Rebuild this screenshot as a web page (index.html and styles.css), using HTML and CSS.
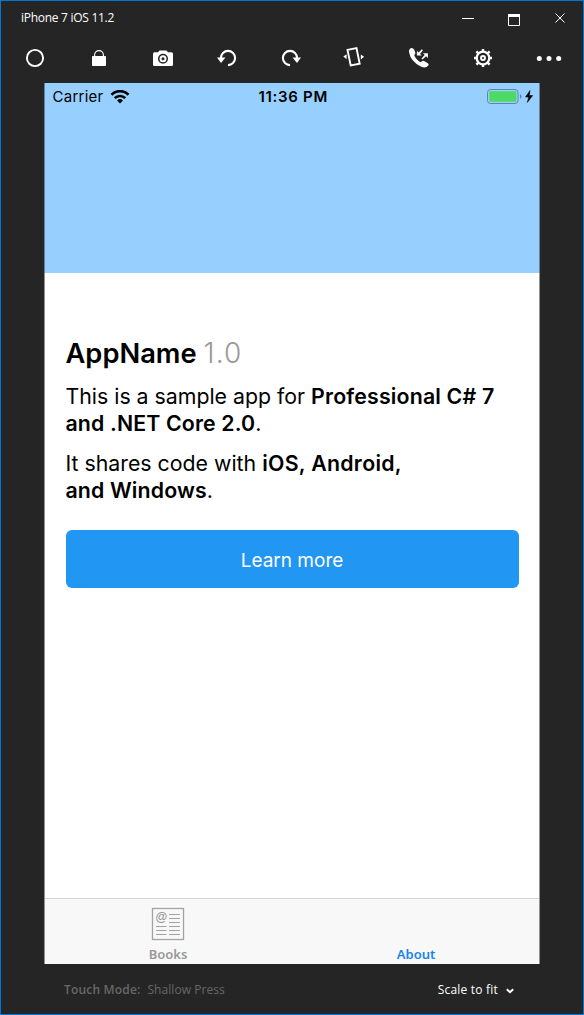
FILE: index.html
```html
<!DOCTYPE html>
<html lang="en">
<head>
<meta charset="utf-8">
<title>iPhone 7 iOS 11.2</title>
<link rel="stylesheet" href="styles.css">
</head>
<body>
<div class="window">
  <header class="titlebar">
    <span class="title">iPhone 7 iOS 11.2</span>
    <svg class="controls" width="106" height="18" viewBox="0 0 106 18" fill="none" stroke="#fff">
      <path d="M0 9.500h12"/>
      <path d="M46.500 6.500h11v10h-11z"/><path d="M46 6.500h12" stroke-width="3"/>
      <path d="M93.500 4.500l9 9m0-9l-9 9"/>
    </svg>
  </header>
  <nav class="toolbar">
    <svg class="tool" viewBox="0 0 24 24"><circle cx="12" cy="12" r="8.100" fill="none" stroke="#fff" stroke-width="1.900"/></svg>
    <svg class="tool" viewBox="0 0 24 24"><rect x="5" y="10" width="14" height="10" rx=".800" fill="#fff"/><path d="M7.600 11V9a4.400 4.400 0 0 1 8.800 0V11" fill="none" stroke="#fff" stroke-width="1.100"/></svg>
    <svg class="tool" viewBox="0 0 24 24"><path fill="#fff" fill-rule="evenodd" d="M3.500 6.200H7L8.600 4.400h6.800L17 6.200h3.500Q22 6.200 22 7.700v10.800q0 1.500-1.500 1.500h-17Q2 20 2 18.500V7.700Q2 6.200 3.500 6.200zM12 7.800a5 5 0 1 0 0 10a5 5 0 1 0 0-10z"/><circle cx="12" cy="12.800" r="2.500" fill="none" stroke="#fff" stroke-width="2"/></svg>
    <svg class="tool" viewBox="0 0 24 24"><path d="M5.900 12A7.100 7.100 0 1 1 13 19.100" fill="none" stroke="#fff" stroke-width="2.100"/><path d="M2 11.500h8.500L6 17z" fill="#fff"/></svg>
    <svg class="tool" viewBox="0 0 24 24"><path d="M18.100 12A7.100 7.100 0 1 0 11 19.100" fill="none" stroke="#fff" stroke-width="2.100"/><path d="M22 11.500h-8.500L18 17z" fill="#fff"/></svg>
    <svg class="tool rotate" viewBox="0 0 24 24"><path d="M5.500 3.900L14.500 2.100 17.700 17.700 8.700 19.500z" fill="none" stroke="#fff" stroke-width="1.900"/><path d="M4.600 8.300v5L1.300 10.500zM18.800 8.500v5l3.300-2.700z" fill="#fff"/></svg>
    <svg class="tool" viewBox="0 0 24 24"><path fill="#fff" d="M3.200 2.400Q5.800 1 7.200 3.700L8.300 6.500Q8.600 8 7.200 9 8.700 13.500 13.500 16.200L15 15.200Q16.200 14.500 17.500 15.300L20.800 17.300Q22.300 18.200 21.300 19.600 18.700 22.700 14.300 20.800 3.500 15.600 2 6Q1.800 3.400 3.200 2.400zM9.900 4.700v4.900h5L13 7.900l2.900-3.700-1-1-3.400 3.200zM20.900 7.200h-5l1.800 1.700-3.200 3.700 1 1 3.500-3.400 1.900 1.800z"/></svg>
    <svg class="tool" viewBox="0 0 24 24"><g stroke="#fff" stroke-width="2.400"><path d="M12 3v3M12 18v3M3 12h3M18 12h3M5.400 5.400l2 2M16.600 16.600l2 2M5.400 18.600l2-2M16.600 7.400l2-2"/></g><circle cx="12" cy="12" r="6.300" fill="none" stroke="#fff" stroke-width="2.300"/><circle cx="12" cy="12" r="2" fill="none" stroke="#fff" stroke-width="1.900"/></svg>
    <svg class="tool dots" viewBox="0 0 28 24"><circle cx="4.300" cy="12.500" r="2.500" fill="#fff"/><circle cx="14" cy="12.500" r="2.500" fill="#fff"/><circle cx="23.700" cy="12.500" r="2.500" fill="#fff"/></svg>
  </nav>
  <main class="phone">
    <section class="hero">
      <div class="status">
        <div class="carrier"><span>Carrier</span>
          <svg width="20" height="14" viewBox="0 0 20 14" fill="none" stroke="#000"><path d="M1.500 4.700a12 12 0 0 1 17 0" stroke-width="2.700"/><path d="M4.700 8.100a7.500 7.500 0 0 1 10.600 0" stroke-width="2.500"/><path d="M10 13.400L7 10.500a4.300 4.300 0 0 1 6 0z" fill="#000" stroke="none"/></svg>
        </div>
        <span class="clock">11:36 PM</span>
        <svg class="battery" width="48" height="16" viewBox="0 0 48 16"><rect x=".500" y=".500" width="30.500" height="14" rx="3" fill="none" stroke="#5a86ad"/><rect x="2.300" y="2.300" width="27" height="10.400" rx="1" fill="#4cd964"/><path d="M33 5v5q3-2.500 0-5z" fill="#4f82ac"/><path d="M43 1.500L38.500 8h3.200L40.300 13.500l5.400-7h-3.400z" fill="#000" stroke="#000" stroke-width=".500"/></svg>
      </div>
    </section>
    <section class="content">
      <h1 class="heading">AppName <span class="version">1.0</span></h1>
      <p class="copy">This is a sample app for <b class="book-title">Professional C# 7</b><br><b>and .NET Core 2.0</b>.</p>
      <p class="copy">It shares code with <b class="platforms">iOS, Android,</b><br><b>and Windows</b>.</p>
      <button class="button"><span>Learn more</span></button>
    </section>
    <footer class="tabs">
      <div class="tab">
        <svg class="book" width="34" height="34" viewBox="0 0 34 34" fill="none" stroke="#a3a3a3"><rect x="1.500" y="1.500" width="31" height="31" stroke-width="1.300"/><path d="M18 7.500h11M18 11.500h11M18 15.500h11M5 19.500h10.500M18 19.500h11M5 23.500h10.500M18 23.500h11M5 27.500h10.500M18 27.500h11" stroke-width="1.200"/><text x="4.500" y="14" class="at">@</text></svg>
        <span class="label">Books</span>
      </div>
      <div class="tab active"><span class="label">About</span></div>
    </footer>
  </main>
  <footer class="bottom">
    <div class="mode"><b>Touch Mode:</b><span>Shallow Press</span></div>
    <div class="scale"><span>Scale to fit</span><svg width="8" height="6" viewBox="0 0 8 6"><path d="M.800 1.200l3.200 3 3.200-3" fill="none" stroke="#fff" stroke-width="1.900"/></svg></div>
  </footer>
</div>
</body>
</html>
```

FILE: styles.css
```css
* { box-sizing: border-box; }
body { margin: 0; overflow: hidden; }
.window { width: 584px; height: 1015px; border: 1px solid #0078d7; background: #252525; color: #fff; font-family: "Noto Sans", sans-serif; display: flex; flex-direction: column; }
.titlebar { height: 36px; display: flex; justify-content: space-between; padding: 8px 15px 0 20px; }
.title { font-family: "Open Sans", sans-serif; font-size: 12px; line-height: 18px; letter-spacing: -.28px; }
.toolbar { height: 46px; display: flex; justify-content: space-between; padding: 8px 20px 0 22px; }
.tool { width: 24px; height: 24px; margin-top: 1px; }
.rotate { margin-left: -1px; margin-right: 1px; }
.dots { width: 28px; }
.phone { width: 496px; height: 881px; margin-left: 43px; background: #fff; color: #000; font-family: Inter, sans-serif; display: flex; flex-direction: column; }
.hero { height: 190px; background: #97d0ff; border: solid #6383a0; border-width: 0 1px; }
.status { height: 28px; padding: 0 4px 0 7.5px; display: grid; grid-template-columns: 1fr auto 1fr; align-items: center; font-size: 15px; line-height: 28px; }
.carrier { display: flex; gap: 7px; align-items: center; letter-spacing: .25px; }
.clock { font-weight: 600; letter-spacing: .7px; margin-left: -1px; }
.battery { justify-self: end; }
.content { flex: 1; padding: 61px 20.5px 0; border: solid #929292; border-width: 0 1px; }
.heading { margin: 0; height: 39px; font-size: 27.3px; line-height: 38px; font-weight: 600; }
.version { font-weight: 300; color: #999; font-size: 28px; letter-spacing: 1.2px; }
.copy { margin: 0; padding-top: 10px; font-size: 21.3px; line-height: 26.5px; white-space: nowrap; }
.copy + .copy { padding-top: 14px; }
.copy b { font-weight: 600; letter-spacing: .14px; }
.copy .book-title { letter-spacing: .18px; }
.copy .platforms { letter-spacing: .3px; }
.button { display: block; width: 453px; height: 58px; margin-top: 27px; padding: 2px 0 0; border: 0; border-radius: 6px; background: #2196f3; color: #fff; font: 400 19px Inter, sans-serif; }
.tabs { height: 66px; background: #f8f8f8; border: solid #929292; border-width: 0 1px; box-shadow: inset 0 1px #d5d5d5; display: flex; font-family: "Noto Sans", sans-serif; }
.tab { flex: 1; display: flex; flex-direction: column; align-items: center; justify-content: flex-end; font-size: 13px; font-weight: 600; line-height: 18px; color: #999; }
.tab:first-child { padding-right: 2px; }
.label { margin-bottom: 1px; }
.active { color: #1683f5; }
.book { margin-bottom: 4px; }
.at { font: 600 12px "Liberation Sans", sans-serif; fill: #999; stroke: none; }
.bottom { flex: 1; padding: 17px 69px 0 63px; display: flex; justify-content: space-between; font: 12px/18px "Open Sans", sans-serif; }
.mode { display: flex; gap: 7px; color: #686868; letter-spacing: .05px; }
.mode b { font-weight: 600; letter-spacing: .18px; }
.scale { display: flex; gap: 8px; letter-spacing: .2px; }
.scale svg { margin-top: 7px; }
```
